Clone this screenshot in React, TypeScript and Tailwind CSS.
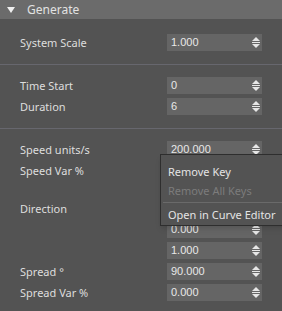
import { ReactNode } from "react";

const Spinner = () => (
  <svg width="8" height="11" viewBox="0 0 8 11" className="shrink-0">
    <path d="M4 0 L8 4 L0 4 Z" fill="#e6e6e6" />
    <rect x="0" y="5" width="8" height="1" fill="#e6e6e6" />
    <path d="M0 7 L8 7 L4 11 Z" fill="#e6e6e6" />
  </svg>
);

const NumberBox = ({ value }: { value: string }) => (
  <div className="w-[95px] h-[17px] bg-[#656565] flex items-center justify-between pl-[4px] pr-[2px]">
    <span className="text-[11px] text-[#e8e8e8] leading-none font-['Liberation_Sans',sans-serif]">
      {value}
    </span>
    <Spinner />
  </div>
);

const Row = ({ label, children }: { label?: string; children: ReactNode }) => (
  <div className="flex items-start pl-[20px] pr-[20px]">
    <div className="flex-1 h-[17px] flex items-center text-[11px] text-[#dedede] leading-none">
      {label}
    </div>
    <div className="flex flex-col gap-[4px]">{children}</div>
  </div>
);

const Separator = () => <div className="h-px bg-[#67676e]" />;

// context menu floating over the speed var / direction rows
const ContextMenu = () => (
  <div className="absolute left-[160px] top-[154px] w-[130px] h-[72px] bg-[#535353] border border-[#2e2e2e] shadow-md text-[11px] leading-none whitespace-nowrap">
    <div className="h-[19px] mt-[7px] flex items-center pl-[7px] text-[#e4e4e4]">Remove Key</div>
    <div className="h-[19px] flex items-center pl-[7px] text-[#7c7c7c]">Remove All Keys</div>
    <div className="h-px bg-[#6a6a6a] ml-[2px] mt-[2px]" />
    <div className="h-[19px] mt-[2px] flex items-center pl-[7px] text-[#e4e4e4]">Open in Curve Editor</div>
  </div>
);

export default function App() {
  return (
    <div className="relative w-[282px] h-[311px] bg-[#535353] overflow-hidden font-['Noto_Sans',sans-serif]">
      <div className="h-[19px] bg-[#6b6b6b] flex items-center">
        <svg width="8" height="6" viewBox="0 0 8 6" className="ml-[7px]">
          <path d="M0 0 L8 0 L4 6 Z" fill="#f0f0f0" />
        </svg>
        <span className="ml-[12px] text-[12px] text-[#e2e2e2] leading-none">Generate</span>
      </div>

      <div className="pt-[15px] pb-[13px]">
        <Row label="System Scale">
          <NumberBox value="1.000" />
        </Row>
      </div>
      <Separator />

      <div className="pt-[12px] pb-[13px] flex flex-col gap-[4px]">
        <Row label="Time Start">
          <NumberBox value="0" />
        </Row>
        <Row label="Duration">
          <NumberBox value="6" />
        </Row>
      </div>
      <Separator />

      <div className="pt-[12px] flex flex-col gap-[4px]">
        <Row label="Speed units/s">
          <NumberBox value="200.000" />
        </Row>
        <Row label="Speed Var %">
          <NumberBox value="0.000" />
        </Row>
        <div className="mt-[17px]">
          <Row label="Direction">
            <NumberBox value="0.000" />
            <NumberBox value="0.000" />
            <NumberBox value="1.000" />
          </Row>
        </div>
        <Row label="Spread °">
          <NumberBox value="90.000" />
        </Row>
        <Row label="Spread Var %">
          <NumberBox value="0.000" />
        </Row>
      </div>

      <ContextMenu />
    </div>
  );
}
